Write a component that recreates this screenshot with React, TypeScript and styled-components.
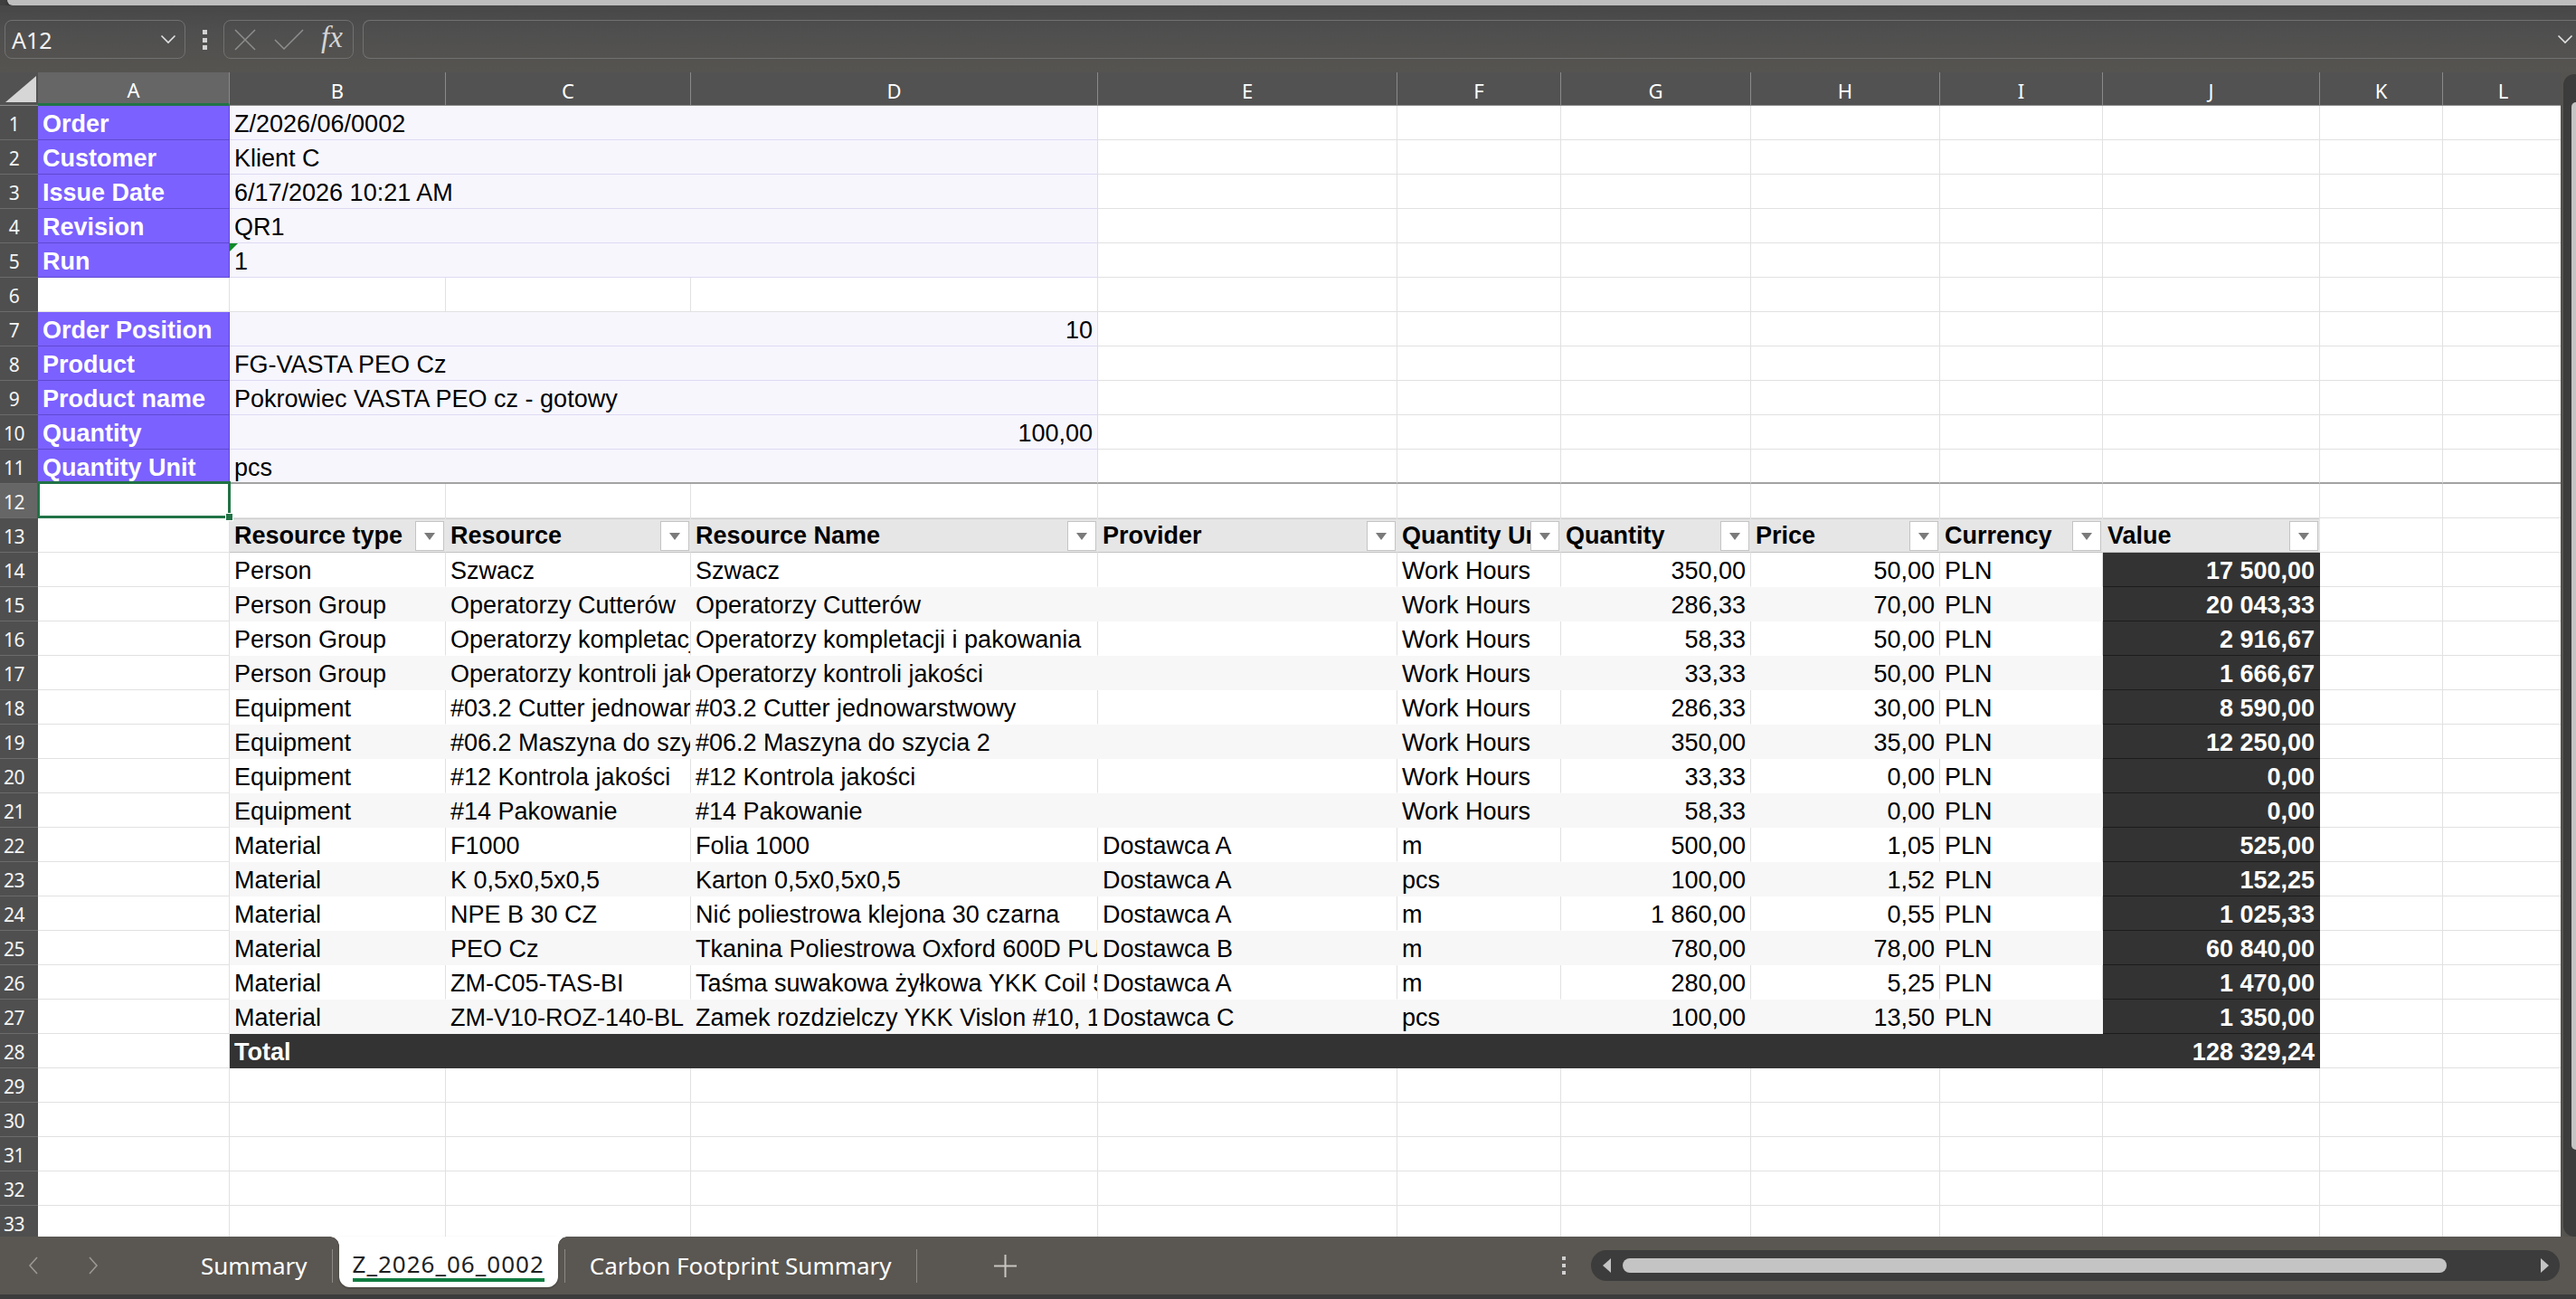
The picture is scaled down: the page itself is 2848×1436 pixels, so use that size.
import React from 'react';
import styled, { createGlobalStyle, css } from 'styled-components';

const GlobalStyle = createGlobalStyle`
  html, body { margin: 0; padding: 0; background: #4d4d4d; overflow: hidden; }
  #root { width: 2848px; height: 1436px; }
  * { box-sizing: border-box; }
`;

const COL_W = [212, 239, 271, 450, 331, 181, 210, 209, 180, 240, 136, 134];
const LETTERS = ['A', 'B', 'C', 'D', 'E', 'F', 'G', 'H', 'I', 'J', 'K', 'L'];
const UI_FONT = '"Noto Sans", "Open Sans", sans-serif';
const CELL_FONT = '"Liberation Sans", Arial, sans-serif';

const Shell = styled.div`
  width: 2848px;
  height: 1436px;
  display: flex;
  flex-direction: column;
  background: #4d4d4d;
  overflow: hidden;
`;

const TopEdge = styled.div`
  height: 6px;
  flex: none;
  background: #3f3f3f;
`;

const RibbonBottom = styled.div`
  height: 6px;
  margin-left: 8px;
  background: #bebebe;
  border-bottom-left-radius: 10px;
  box-shadow: 0 2px 4px rgba(0, 0, 0, 0.45);
`;

const Toolbar = styled.div`
  height: 74px;
  flex: none;
  display: flex;
  align-items: flex-start;
  padding: 16px 0 0 5px;
  background: linear-gradient(#474747, #4f4f4f 40%, #565450);
`;

const NameBox = styled.div`
  width: 200px;
  height: 43px;
  flex: none;
  border: 1px solid #717171;
  border-radius: 8px;
  display: flex;
  align-items: center;
  justify-content: space-between;
  padding: 0 9px 0 7px;
  font-family: ${UI_FONT};
  font-size: 25px;
  color: #f2f2f2;
`;

const Kebab = styled.div`
  width: 5px;
  height: 22px;
  margin: 11px 0 0 19px;
  display: flex;
  flex-direction: column;
  justify-content: space-between;
  flex: none;
`;

const KebabDot = styled.span`
  width: 5px;
  height: 5px;
  background: #d2d2d2;
`;

const FxBox = styled.div`
  width: 144px;
  height: 43px;
  margin-left: 18px;
  flex: none;
  border: 1px solid #717171;
  border-radius: 8px;
  display: flex;
  align-items: center;
  padding-left: 11px;
  gap: 20px;
`;

const FxText = styled.span`
  font-family: "Liberation Serif", "DejaVu Serif", serif;
  font-style: italic;
  font-size: 33px;
  color: #d4d4d4;
  margin-left: -1px;
  line-height: 1;
  padding-bottom: 4px;
`;

const FormulaInput = styled.div`
  flex: 1;
  height: 43px;
  margin-left: 10px;
  border: 1px solid #717171;
  border-right: none;
  border-radius: 8px 0 0 8px;
  display: flex;
  align-items: center;
  justify-content: flex-end;
  padding-right: 3px;
`;

const Main = styled.div`
  height: 1287px;
  flex: none;
  display: flex;
  overflow: hidden;
`;

const SheetGrid = styled.div`
  width: 2831px;
  flex: none;
  overflow: hidden;
  background: #fff;
  display: grid;
  grid-template-columns: 42px ${COL_W.map((w) => `${w}px`).join(' ')};
  grid-template-rows: 37px;
  grid-auto-rows: 38px;
  align-content: start;
`;

const Corner = styled.div`
  background: #525252;
  border-bottom: 1px solid #8a8a8a;
  display: flex;
  align-items: flex-end;
  justify-content: flex-end;
  padding: 0 2px 3px 0;
`;

const ColHead = styled.div<{ $active?: boolean }>`
  background: ${(p) => (p.$active ? '#666666' : '#525252')};
  border-right: 1px solid #8a8a8a;
  border-bottom: ${(p) => (p.$active ? '3px solid #217346' : '1px solid #8a8a8a')};
  color: #ffffff;
  font-family: ${UI_FONT};
  font-size: 22px;
  display: flex;
  align-items: center;
  justify-content: center;
  padding-top: 4px;
  overflow: hidden;
`;

const RowHead = styled.div<{ $active?: boolean }>`
  background: ${(p) => (p.$active ? '#666666' : '#4f4f4f')};
  border-bottom: 1px solid #6b6b6b;
  color: #f4f4f4;
  font-family: ${UI_FONT};
  font-size: 21px;
  display: flex;
  align-items: center;
  justify-content: center;
  padding: 2px 11px 0 0;
  letter-spacing: -0.5px;
`;

type Kind = 'blank' | 'label' | 'info' | 'th' | 'td' | 'band' | 'val' | 'total';

const kindStyles: Record<Kind, ReturnType<typeof css>> = {
  blank: css``,
  label: css`
    background: #7b61ff;
    color: #ffffff;
    font-weight: bold;
    border-right-color: #5e49d2;
    border-bottom-color: #5e49d2;
  `,
  info: css`
    background: #f7f6fd;
    border-right-color: #dedaf3;
    border-bottom-color: #dedaf3;
  `,
  th: css`
    background: #e6e6e6;
    font-weight: bold;
    border-right-color: #e6e6e6;
    border-bottom-color: #c2c2c2;
    box-shadow: inset 0 1px 0 #cfcfcf;
    display: flex;
    padding-right: 1px;
  `,
  td: css`
    border-bottom-color: #ffffff;
  `,
  band: css`
    background: #f7f7f7;
    border-right-color: #f7f7f7;
    border-bottom-color: #f7f7f7;
  `,
  val: css`
    background: #333333;
    color: #ffffff;
    font-weight: bold;
    border-right-color: #333333;
    border-bottom-color: #1c1c1c;
  `,
  total: css`
    background: #333333;
    color: #ffffff;
    font-weight: bold;
    border-right-color: #333333;
    border-bottom-color: #333333;
  `,
};

const Cell = styled.div<{
  $kind: Kind;
  $right?: boolean;
  $span?: number;
  $freeze?: boolean;
  $selected?: boolean;
}>`
  grid-column: span ${(p) => p.$span ?? 1};
  position: relative;
  height: 38px;
  line-height: 37px;
  padding: 2px 5px 0 5px;
  white-space: nowrap;
  overflow: hidden;
  font-family: ${CELL_FONT};
  font-size: 27px;
  color: #000000;
  background: #ffffff;
  border-right: 1px solid #e1e1e1;
  border-bottom: 1px solid #e1e1e1;
  text-align: ${(p) => (p.$right ? 'right' : 'left')};
  ${(p) => kindStyles[p.$kind]}
  ${(p) =>
    p.$freeze &&
    css`
      border-bottom: 2px solid #a3a3a3;
    `}
  ${(p) =>
    p.$selected &&
    css`
      overflow: visible;
      z-index: 3;
    `}
`;

const SelectionFrame = styled.div`
  position: absolute;
  top: -3px;
  left: -1px;
  right: -2px;
  bottom: -1px;
  border: 3px solid #217346;
  pointer-events: none;
`;

const FillHandle = styled.div`
  position: absolute;
  right: -6px;
  bottom: -6px;
  width: 9px;
  height: 9px;
  background: #217346;
  border: 1px solid #ffffff;
`;

const ErrorMark = styled.div`
  position: absolute;
  top: 0;
  left: 0;
  width: 0;
  height: 0;
  border-top: 9px solid #128a2c;
  border-right: 9px solid transparent;
`;

const ThText = styled.span`
  flex: 1;
  min-width: 0;
  overflow: hidden;
  line-height: 35px;
`;

const FilterBtn = styled.span`
  width: 32px;
  height: 33px;
  flex: none;
  margin-top: 1px;
  background: #ffffff;
  border: 1px solid #c4c4c4;
  display: flex;
  align-items: center;
  justify-content: center;
`;

const VScroll = styled.div`
  width: 17px;
  flex: none;
  background: #55534f;
  padding: 2px 0 0 3px;
`;

const VTrack = styled.div`
  height: 100%;
  background: #3c3c3c;
  border-radius: 12px 0 0 12px;
  padding: 31px 0 0 9px;
  display: flex;
  flex-direction: column;
`;

const VThumb = styled.div`
  height: 1158px;
  background: #c4c4c4;
  border-radius: 6px 0 0 6px;
`;

const TabBar = styled.div`
  height: 64px;
  flex: none;
  background: #5a5651;
  display: flex;
  align-items: center;
`;

const TabNav = styled.div`
  width: 195px;
  flex: none;
  display: flex;
  align-items: center;
  gap: 54px;
  padding-left: 31px;
`;

const SheetTab = styled.div<{ $active?: boolean }>`
  flex: none;
  font-family: ${UI_FONT};
  font-size: 26px;
  color: #ffffff;
  padding: 0 27px;
  line-height: 31px;
  ${(p) =>
    p.$active &&
    css`
      align-self: flex-start;
      position: relative;
      height: 56px;
      margin: 0 7px;
      padding: 15px 15px 0;
      background: #ffffff;
      color: #1f1f1f;
      border-radius: 0 0 12px 12px;
      box-shadow: 0 1px 2px rgba(0, 0, 0, 0.3);
      &::before,
      &::after {
        content: '';
        position: absolute;
        top: 0;
        width: 10px;
        height: 10px;
      }
      &::before {
        left: -10px;
        background: radial-gradient(circle at 0 100%, transparent 9.5px, #ffffff 10px);
      }
      &::after {
        right: -10px;
        background: radial-gradient(circle at 100% 100%, transparent 9.5px, #ffffff 10px);
      }
    `}
`;

const TabLabel = styled.span<{ $active?: boolean }>`
  display: block;
  ${(p) =>
    p.$active &&
    css`
      letter-spacing: 1px;
      border-bottom: 4px solid #107c41;
    `}
`;

const TabSep = styled.span`
  width: 1px;
  height: 37px;
  flex: none;
  background: #8c8883;
`;

const PlusBtn = styled.div`
  margin-left: 84px;
  display: flex;
  align-items: center;
`;

const Spacer = styled.div`
  flex: 1;
`;

const VDots = styled.div`
  width: 4px;
  height: 20px;
  display: flex;
  flex-direction: column;
  justify-content: space-between;
  margin-right: 28px;
`;

const VDot = styled.span`
  width: 4px;
  height: 4px;
  background: #d0d0d0;
`;

const HTrack = styled.div`
  width: 1071px;
  height: 34px;
  margin-right: 18px;
  background: #3c3c3c;
  border-radius: 17px;
  display: flex;
  align-items: center;
  padding: 0 12px 0 13px;
`;

const HThumb = styled.div`
  width: 911px;
  height: 16px;
  margin-left: 13px;
  background: #c4c4c4;
  border-radius: 8px;
`;

const BottomStrip = styled.div`
  height: 5px;
  flex: none;
  background: #3c3c3c;
`;

const Chevron = () => (
  <svg width="18" height="11" viewBox="0 0 18 11">
    <path d="M1.5 1.5 L9 9 L16.5 1.5" fill="none" stroke="#e2e2e2" strokeWidth="1.6" />
  </svg>
);

const CrossIcon = () => (
  <svg width="24" height="24" viewBox="0 0 24 24">
    <path d="M1 1 L23 23 M23 1 L1 23" fill="none" stroke="#8e8e8e" strokeWidth="1.5" />
  </svg>
);

const CheckIcon = () => (
  <svg width="33" height="23" viewBox="0 0 33 23">
    <path d="M1 12 L11 22 L32 1" fill="none" stroke="#8e8e8e" strokeWidth="1.5" />
  </svg>
);

const CornerTriangle = () => (
  <svg width="34" height="29" viewBox="0 0 34 29">
    <path d="M34 0 L34 29 L0 29 Z" fill="#d6d6d6" />
  </svg>
);

const FilterArrow = () => (
  <svg width="12" height="8" viewBox="0 0 12 8">
    <path d="M0 0 L12 0 L6 8 Z" fill="#7a7a7a" />
  </svg>
);

const NavArrow = ({ dir }: { dir: 'l' | 'r' }) => (
  <svg width="12" height="20" viewBox="0 0 12 20">
    <path
      d={dir === 'l' ? 'M10 1 L2 10 L10 19' : 'M2 1 L10 10 L2 19'}
      fill="none"
      stroke="#9b9792"
      strokeWidth="1.6"
    />
  </svg>
);

const PlusIcon = () => (
  <svg width="27" height="27" viewBox="0 0 27 27">
    <path d="M13.5 1 V26 M1 13.5 H26" fill="none" stroke="#c9c6c2" strokeWidth="2" />
  </svg>
);

const ScrollArrow = ({ dir }: { dir: 'l' | 'r' }) => (
  <svg width="9" height="16" viewBox="0 0 9 16">
    <path d={dir === 'l' ? 'M9 0 L9 16 L0 8 Z' : 'M0 0 L0 16 L9 8 Z'} fill="#c4c4c4" />
  </svg>
);

const info: Record<number, [string, string, boolean?]> = {
  1: ['Order', 'Z/2026/06/0002'],
  2: ['Customer', 'Klient C'],
  3: ['Issue Date', '6/17/2026 10:21 AM'],
  4: ['Revision', 'QR1'],
  5: ['Run', '1'],
  7: ['Order Position', '10', true],
  8: ['Product', 'FG-VASTA PEO Cz'],
  9: ['Product name', 'Pokrowiec VASTA PEO cz - gotowy'],
  10: ['Quantity', '100,00', true],
  11: ['Quantity Unit', 'pcs'],
};

const tableHead = [
  'Resource type',
  'Resource',
  'Resource Name',
  'Provider',
  'Quantity Unit',
  'Quantity',
  'Price',
  'Currency',
  'Value',
];

const tableRows: string[][] = [
  ['Person', 'Szwacz', 'Szwacz', '', 'Work Hours', '350,00', '50,00', 'PLN', '17 500,00'],
  ['Person Group', 'Operatorzy Cutterów', 'Operatorzy Cutterów', '', 'Work Hours', '286,33', '70,00', 'PLN', '20 043,33'],
  ['Person Group', 'Operatorzy kompletacji i pakowania', 'Operatorzy kompletacji i pakowania', '', 'Work Hours', '58,33', '50,00', 'PLN', '2 916,67'],
  ['Person Group', 'Operatorzy kontroli jakości', 'Operatorzy kontroli jakości', '', 'Work Hours', '33,33', '50,00', 'PLN', '1 666,67'],
  ['Equipment', '#03.2 Cutter jednowarstwowy', '#03.2 Cutter jednowarstwowy', '', 'Work Hours', '286,33', '30,00', 'PLN', '8 590,00'],
  ['Equipment', '#06.2 Maszyna do szycia 2', '#06.2 Maszyna do szycia 2', '', 'Work Hours', '350,00', '35,00', 'PLN', '12 250,00'],
  ['Equipment', '#12 Kontrola jakości', '#12 Kontrola jakości', '', 'Work Hours', '33,33', '0,00', 'PLN', '0,00'],
  ['Equipment', '#14 Pakowanie', '#14 Pakowanie', '', 'Work Hours', '58,33', '0,00', 'PLN', '0,00'],
  ['Material', 'F1000', 'Folia 1000', 'Dostawca A', 'm', '500,00', '1,05', 'PLN', '525,00'],
  ['Material', 'K 0,5x0,5x0,5', 'Karton 0,5x0,5x0,5', 'Dostawca A', 'pcs', '100,00', '1,52', 'PLN', '152,25'],
  ['Material', 'NPE B 30 CZ', 'Nić poliestrowa klejona 30 czarna', 'Dostawca A', 'm', '1 860,00', '0,55', 'PLN', '1 025,33'],
  ['Material', 'PEO Cz', 'Tkanina Poliestrowa Oxford 600D PU coated', 'Dostawca B', 'm', '780,00', '78,00', 'PLN', '60 840,00'],
  ['Material', 'ZM-C05-TAS-BI', 'Taśma suwakowa żyłkowa YKK Coil 5 biała', 'Dostawca A', 'm', '280,00', '5,25', 'PLN', '1 470,00'],
  ['Material', 'ZM-V10-ROZ-140-BL', 'Zamek rozdzielczy YKK Vislon #10, 140 cm', 'Dostawca C', 'pcs', '100,00', '13,50', 'PLN', '1 350,00'],
];

const RIGHT_COLS = new Set([5, 6, 8]);
const TOTAL_ROWS = 33;

function blanks(r: number, from: number, freeze = false) {
  const out: React.ReactNode[] = [];
  for (let c = from; c < LETTERS.length; c++) {
    out.push(<Cell key={`${r}-${c}`} $kind="blank" $freeze={freeze} />);
  }
  return out;
}

function renderRow(r: number): React.ReactNode[] {
  const cells: React.ReactNode[] = [
    <RowHead key={`h${r}`} $active={r === 12}>
      {r}
    </RowHead>,
  ];
  const inf = info[r];
  if (inf) {
    const freeze = r === 11;
    cells.push(
      <Cell key={`${r}-A`} $kind="label" $freeze={freeze}>
        {inf[0]}
      </Cell>,
      <Cell key={`${r}-B`} $kind="info" $span={3} $right={inf[2]} $freeze={freeze}>
        {r === 5 && <ErrorMark />}
        {inf[1]}
      </Cell>,
      ...blanks(r, 4, freeze),
    );
    return cells;
  }
  if (r === 12) {
    cells.push(
      <Cell key="12-A" $kind="blank" $selected>
        <SelectionFrame>
          <FillHandle />
        </SelectionFrame>
      </Cell>,
      ...blanks(r, 1),
    );
    return cells;
  }
  if (r === 13) {
    cells.push(<Cell key="13-A" $kind="blank" />);
    tableHead.forEach((t, i) => {
      cells.push(
        <Cell key={`13-${i}`} $kind="th">
          <ThText>{t}</ThText>
          <FilterBtn>
            <FilterArrow />
          </FilterBtn>
        </Cell>,
      );
    });
    cells.push(...blanks(r, 10));
    return cells;
  }
  if (r >= 14 && r <= 27) {
    const data = tableRows[r - 14];
    const kind: Kind = r % 2 === 0 ? 'td' : 'band';
    cells.push(<Cell key={`${r}-A`} $kind="blank" />);
    data.forEach((v, i) => {
      const isVal = i === 8;
      cells.push(
        <Cell key={`${r}-${i}`} $kind={isVal ? 'val' : kind} $right={RIGHT_COLS.has(i)}>
          {v}
        </Cell>,
      );
    });
    cells.push(...blanks(r, 10));
    return cells;
  }
  if (r === 28) {
    cells.push(
      <Cell key="28-A" $kind="blank" />,
      <Cell key="28-B" $kind="total" $span={8}>
        Total
      </Cell>,
      <Cell key="28-J" $kind="total" $right>
        128 329,24
      </Cell>,
      ...blanks(r, 10),
    );
    return cells;
  }
  cells.push(...blanks(r, 0));
  return cells;
}

export default function App() {
  const rows: React.ReactNode[] = [];
  for (let r = 1; r <= TOTAL_ROWS; r++) rows.push(...renderRow(r));

  return (
    <>
      <GlobalStyle />
      <Shell>
        <TopEdge>
          <RibbonBottom />
        </TopEdge>
        <Toolbar>
          <NameBox>
            <span>A12</span>
            <Chevron />
          </NameBox>
          <Kebab>
            <KebabDot />
            <KebabDot />
            <KebabDot />
          </Kebab>
          <FxBox>
            <CrossIcon />
            <CheckIcon />
            <FxText>fx</FxText>
          </FxBox>
          <FormulaInput>
            <Chevron />
          </FormulaInput>
        </Toolbar>
        <Main>
          <SheetGrid>
            <Corner>
              <CornerTriangle />
            </Corner>
            {LETTERS.map((l) => (
              <ColHead key={l} $active={l === 'A'}>
                {l}
              </ColHead>
            ))}
            {rows}
          </SheetGrid>
          <VScroll>
            <VTrack>
              <VThumb />
            </VTrack>
          </VScroll>
        </Main>
        <TabBar>
          <TabNav>
            <NavArrow dir="l" />
            <NavArrow dir="r" />
          </TabNav>
          <SheetTab>Summary</SheetTab>
          <TabSep />
          <SheetTab $active>
            <TabLabel $active>Z_2026_06_0002</TabLabel>
          </SheetTab>
          <TabSep />
          <SheetTab>Carbon Footprint Summary</SheetTab>
          <TabSep />
          <PlusBtn>
            <PlusIcon />
          </PlusBtn>
          <Spacer />
          <VDots>
            <VDot />
            <VDot />
            <VDot />
          </VDots>
          <HTrack>
            <ScrollArrow dir="l" />
            <HThumb />
            <Spacer />
            <ScrollArrow dir="r" />
          </HTrack>
        </TabBar>
        <BottomStrip />
      </Shell>
    </>
  );
}
